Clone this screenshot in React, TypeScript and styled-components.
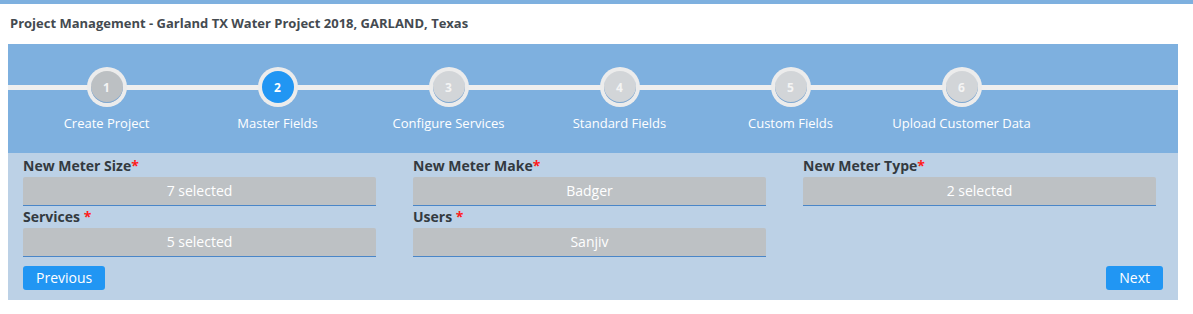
import React from "react";
import styled, { createGlobalStyle } from "styled-components";

const Global = createGlobalStyle`
  html, body { margin: 0; padding: 0; background: #ffffff; }
  body { font-family: "Open Sans", "Liberation Sans", sans-serif; }
  * { box-sizing: border-box; }
`;

const TopStripe = styled.div`
  height: 4px;
  background: #7eb0df;
`;

const Title = styled.h1`
  margin: 0;
  padding: 9px 10px 0 10px;
  height: 40px;
  font-size: 13px;
  line-height: 20px;
  font-weight: 700;
  color: #444a50;
`;

const Panel = styled.section`
  margin: 0 15px 0 8px;
  width: 1170px;
`;

const Stepper = styled.div`
  position: relative;
  background: #7eb0df;
  padding: 23px 0 21px 13px;
  display: flex;
  &::before {
    content: "";
    position: absolute;
    left: 0;
    right: 0;
    top: 41px;
    height: 5px;
    background: #efefef;
  }
`;

const Step = styled.div`
  position: relative;
  width: 171px;
  display: flex;
  flex-direction: column;
  align-items: center;
`;

const Circle = styled.div`
  width: 40px;
  height: 40px;
  border-radius: 50%;
  background: #ececec;
  padding: 4px;
  display: flex;
`;

const Inner = styled.div<{ $state: "done" | "active" | "todo" }>`
  flex: 1;
  border-radius: 50%;
  background: ${(p) =>
    p.$state === "active" ? "#2196f3" : p.$state === "done" ? "#bcc0c3" : "#d2d5d8"};
  box-shadow: ${(p) => (p.$state === "active" ? "none" : "inset 0 -1px 0 #7da7d2")};
  color: ${(p) => (p.$state === "active" ? "#ffffff" : "#f4f4f4")};
  font-size: 12px;
  font-weight: 700;
  display: flex;
  align-items: center;
  justify-content: center;
`;

const StepLabel = styled.div`
  margin-top: 7px;
  font-size: 13px;
  line-height: 18px;
  color: #ffffff;
  white-space: nowrap;
`;

const Form = styled.div`
  background: #bcd1e6;
  padding: 2px 0 10px 0;
`;

const Grid = styled.div`
  display: grid;
  grid-template-columns: repeat(3, 390px);
`;

const Column = styled.div`
  padding: 0 22px 0 15px;
`;

const Label = styled.div`
  font-size: 14px;
  line-height: 22px;
  font-weight: 700;
  color: #333a40;
`;

const Req = styled.span`
  color: #ff1a1a;
`;

const Select = styled.div`
  height: 29px;
  background: #bdc1c4;
  border-bottom: 1px solid #4a86c8;
  border-radius: 2px 2px 0 0;
  color: #ffffff;
  font-size: 14px;
  line-height: 28px;
  text-align: center;
`;

const Actions = styled.div`
  margin-top: 9px;
  padding: 0 15px;
  display: flex;
  justify-content: space-between;
`;

const Button = styled.button`
  height: 24px;
  border: none;
  border-radius: 3px;
  background: #2196f3;
  color: #ffffff;
  font-family: "Open Sans", "Liberation Sans", sans-serif;
  font-size: 14px;
  line-height: 24px;
  padding: 0 13px;
`;

const steps = [
  "Create Project",
  "Master Fields",
  "Configure Services",
  "Standard Fields",
  "Custom Fields",
  "Upload Customer Data",
];

type Field = { label: string; value: string; space?: boolean };

const columns: Field[][] = [
  [
    { label: "New Meter Size", value: "7 selected" },
    { label: "Services", value: "5 selected", space: true },
  ],
  [
    { label: "New Meter Make", value: "Badger" },
    { label: "Users", value: "Sanjiv", space: true },
  ],
  [{ label: "New Meter Type", value: "2 selected" }],
];

export default function App() {
  return (
    <>
      <Global />
      <TopStripe />
      <Title>Project Management - Garland TX Water Project 2018, GARLAND, Texas</Title>
      <Panel>
        <Stepper>
          {steps.map((s, i) => {
            const state = i === 0 ? "done" : i === 1 ? "active" : "todo";
            return (
              <Step key={s}>
                <Circle>
                  <Inner $state={state}>{i + 1}</Inner>
                </Circle>
                <StepLabel>{s}</StepLabel>
              </Step>
            );
          })}
        </Stepper>
        <Form>
          <Grid>
            {columns.map((col, ci) => (
              <Column key={ci}>
                {col.map((f) => (
                  <React.Fragment key={f.label}>
                    <Label>
                      {f.label}
                      {f.space ? " " : ""}
                      <Req>*</Req>
                    </Label>
                    <Select>{f.value}</Select>
                  </React.Fragment>
                ))}
              </Column>
            ))}
          </Grid>
          <Actions>
            <Button>Previous</Button>
            <Button>Next</Button>
          </Actions>
        </Form>
      </Panel>
    </>
  );
}
